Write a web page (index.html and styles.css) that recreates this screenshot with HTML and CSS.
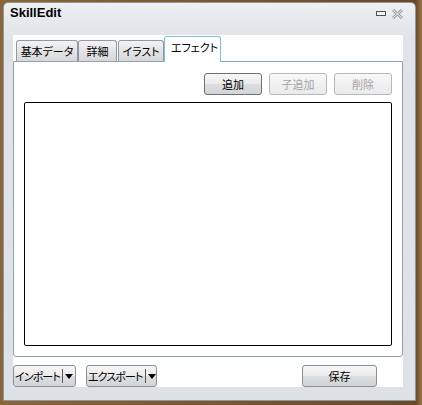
FILE: index.html
```html
<!DOCTYPE html>
<html lang="ja">
<head>
  <meta charset="UTF-8">
  <title>SkillEdit</title>
  <link rel="stylesheet" href="styles.css">
</head>
<body>
  <div class="window">
    <div class="titlebar">
      <span class="title">SkillEdit</span>
      <div class="controls">
        <svg width="10" height="6" viewBox="0 0 10 6"><rect x="0.5" y="0.5" width="9" height="4" fill="#f4f4f4" stroke="#4c5258"/></svg>
        <svg width="11" height="10" viewBox="0 0 11 10"><path d="M1 1 L10 9 M10 1 L1 9" stroke="#9aa0a6" stroke-width="3"/><path d="M1 1 L10 9 M10 1 L1 9" stroke="#eceef0" stroke-width="1"/></svg>
      </div>
    </div>

    <div class="client">
      <div class="tabs">
        <div class="tab tab-basic">基本データ</div>
        <div class="tab tab-detail">詳細</div>
        <div class="tab tab-illust">イラスト</div>
        <div class="tab tab-effect active">エフェクト</div>
      </div>

      <div class="panel">
        <div class="actions">
          <button class="btn">追加</button>
          <button class="btn disabled">子追加</button>
          <button class="btn disabled">削除</button>
        </div>
        <div class="listbox"></div>
      </div>

      <div class="footer">
        <button class="btn split import"><span class="label">インポート</span><span class="sep"></span><span class="arrow"></span></button>
        <button class="btn split export"><span class="label">エクスポート</span><span class="sep"></span><span class="arrow"></span></button>
        <button class="btn save">保存</button>
      </div>
    </div>
  </div>
</body>
</html>
```

FILE: styles.css
```css
/* Desktop behind the dialog */
body {
  margin: 0;
  padding: 2px 0 0 3px;
  background: linear-gradient(to right, #8a6538 0, #8a6538 3px, #6b4a2a 416px, #9a7442 422px);
  font-family: "Noto Sans CJK JP", "Liberation Sans", sans-serif;
  font-size: 11px;
  font-feature-settings: "palt";
  color: #000;
  height: 405px;
  box-sizing: border-box;
  overflow: hidden;
  white-space: nowrap;
}

/* Window frame */
.window {
  width: 413px;
  height: 399px;
  box-sizing: border-box;
  border: 1px solid #8d979f;
  border-radius: 5px 5px 0 0;
  background: linear-gradient(to bottom, #eef0f2 0, #e6e9ec 20px, #dfe3e7 40px, #dde2e6 100%);
  padding: 0 12px 13px 9px;
  display: flex;
  flex-direction: column;
}

.titlebar {
  height: 32px;
  display: flex;
  align-items: flex-start;
  justify-content: space-between;
  padding-top: 2px;
  box-sizing: border-box;
}

.title {
  font-family: "Liberation Sans", Arial, sans-serif;
  font-weight: bold;
  font-size: 13px;
  margin-left: -3px;
  line-height: 16px;
}

.controls {
  display: flex;
  align-items: center;
  gap: 6px;
  margin-top: 4px;
}

.client {
  flex: 1;
  background: #fff;
  display: flex;
  flex-direction: column;
}

/* Tabs */
.tabs {
  height: 26px;
  display: flex;
  align-items: flex-end;
  padding-left: 3px;
}

.tab {
  height: 21px;
  box-sizing: border-box;
  border: 1px solid #8e9aa6;
  border-bottom: none;
  border-radius: 3px 3px 0 0;
  background: linear-gradient(to bottom, #f3f3f3, #e4e4e4 50%, #d6d8da);
  display: flex;
  align-items: center;
  justify-content: center;
  line-height: 1;
  padding-top: 1px;
}

.tab-basic { width: 62px; }
.tab-detail { width: 39px; }
.tab-illust { width: 46px; margin-left: 1px; }

.tab.active {
  width: 57px;
  height: 26px;
  background: #fff;
  border-color: #7fc2d6;
  position: relative;
  margin-bottom: -1px;
  z-index: 1;
  justify-content: flex-start;
  padding-left: 6px;
  padding-bottom: 6px;
}

.panel {
  height: 296px;
  box-sizing: border-box;
  border: 1px solid #8fa1b3;
  border-radius: 0 0 3px 3px;
  padding: 11px 10px 9px 10px;
  display: flex;
  flex-direction: column;
}

.actions {
  display: flex;
  justify-content: flex-end;
  gap: 7px;
}

/* Buttons */
.btn {
  height: 22px;
  width: 58px;
  box-sizing: border-box;
  border: 1px solid #707070;
  border-radius: 3px;
  background: linear-gradient(to bottom, #f6f6f6, #ebebeb 50%, #dcdedf 51%, #d2d5d8);
  font-family: inherit;
  font-size: 11px;
  font-feature-settings: "palt";
  white-space: nowrap;
  color: #000;
  padding: 0;
  display: flex;
  align-items: center;
  justify-content: center;
  line-height: 1;
  overflow: hidden;
}

.btn.disabled {
  border-color: #b5b9bd;
  background: linear-gradient(to bottom, #f8f8f8, #f1f1f1 50%, #e9eaeb);
  color: #a3a3a3;
}

.listbox {
  margin-top: 7px;
  height: 244px;
  box-sizing: border-box;
  border: 1px solid #000;
  border-radius: 2px;
  background: #fff;
}

.footer {
  display: flex;
  align-items: flex-start;
  padding-top: 8px;
}

.btn.split {
  justify-content: flex-start;
  padding: 0 3px 0 1px;
  border-color: #8b8f93;
}

.split .label {
  flex: 1;
  letter-spacing: -0.9px;
  text-align: left;
}

.import { width: 63px; }
.export { width: 71px; margin-left: 10px; }

.sep {
  width: 1px;
  height: 14px;
  background: #555;
  margin-left: 2px;
  flex-shrink: 0;
}

.arrow {
  width: 0;
  height: 0;
  border-left: 4px solid transparent;
  border-right: 4px solid transparent;
  border-top: 5px solid #000;
  margin-left: 2px;
  flex-shrink: 0;
}

.save {
  width: 75px;
  margin-left: auto;
  margin-right: 26px;
  border-color: #8b8f93;
}
```
